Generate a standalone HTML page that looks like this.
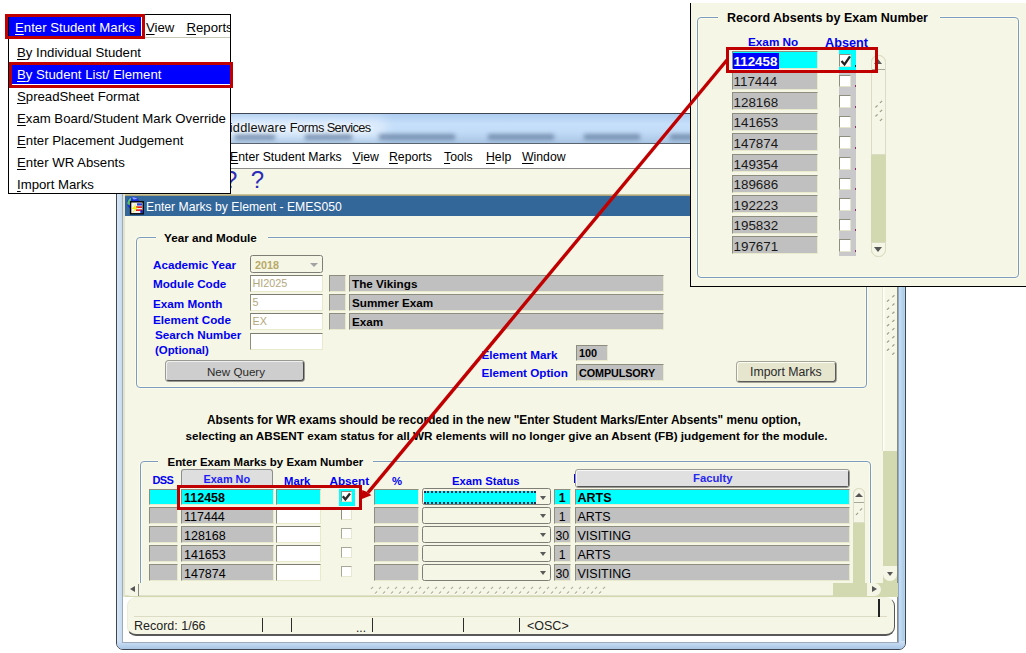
<!DOCTYPE html>
<html><head><meta charset="utf-8"><title>Enter Marks by Element</title>
<style>
*{box-sizing:border-box;margin:0;padding:0}
html,body{width:1026px;height:653px;overflow:hidden;background:#fff}
body{position:relative;font-family:"Liberation Sans",sans-serif;font-size:12px;color:#000}
.a{position:absolute}
.t{position:absolute;white-space:nowrap;line-height:1}
.b{font-weight:bold;font-size:11.7px}
.bl{color:#0000f4}
.fld{position:absolute;background:#c0c0c0;border:1px solid;border-color:#8e8e7e #e9e9cc #e9e9cc #8e8e7e}
.inp{position:absolute;background:#fff;border:1px solid;border-color:#7c7c70 #e9e9cc #e9e9cc #8e8e7e;border-top-width:1.5px}
.cy{background:#00ffff}
.cb{position:absolute;width:11px;height:11px;background:#fff;border:1px solid;border-color:#8e8e7e #e4e4c8 #e4e4c8 #8e8e7e}
.dd{position:absolute;background:#f6f6e6;border:1.4px solid #7e7e76;border-radius:2.5px}
.ar{position:absolute;width:0;height:0;border:3.5px solid transparent}
.gb{position:absolute;border:1.3px solid #7c9bbf;border-radius:4px;box-shadow:0 0 0 1px #fcfcec,inset 0 0 0 1px #fcfcec}
.sep{position:absolute;width:1.4px;height:14px;background:#2c2c2c;top:618px}
.mi{position:absolute;white-space:nowrap;line-height:1;font-size:13.2px;left:17px}
.mb{position:absolute;white-space:nowrap;line-height:1;font-size:12.25px;top:151px}
u{text-decoration:underline;text-underline-offset:1.5px}
</style></head><body>
<!-- main window frame -->
<div class="a" style="left:116px;top:113px;width:790px;height:537px;background:linear-gradient(90deg,#d9e7f6,#c3d9ef 6px,#c3d9ef 780px,#c4ddf2 783px,#a8cbe8 787px,#c4dcf2);border:1px solid #3e4652;border-radius:6px 6px 7px 7px"></div>
<div class="a" style="left:117px;top:641px;width:788px;height:8px;background:linear-gradient(#cfe1f5,#a8c6e6);border-radius:0 0 6px 6px"></div>
<div class="a" style="left:117px;top:114px;width:788px;height:29px;overflow:hidden;background:linear-gradient(#aecdf0,#c6dffa 35%,#c2dcf8 60%,#a9c5e3);border-radius:5px 5px 0 0"><div class="a" style="left:90px;top:4px;width:180px;height:20px;background:#e4f0fd;filter:blur(6px);opacity:.8;border-radius:10px"></div><div class="a" style="left:118px;top:19.5px;width:40px;height:6px;background:#60799c;filter:blur(2.2px);opacity:.7"></div><div class="a" style="left:188px;top:19.5px;width:47px;height:6px;background:#60799c;filter:blur(2.2px);opacity:.7"></div><div class="a" style="left:262px;top:19.5px;width:76px;height:6px;background:#60799c;filter:blur(2.2px);opacity:.7"></div><div class="a" style="left:371px;top:19.5px;width:66px;height:6px;background:#60799c;filter:blur(2.2px);opacity:.7"></div><div class="a" style="left:467px;top:19.5px;width:56px;height:6px;background:#60799c;filter:blur(2.2px);opacity:.7"></div><div class="a" style="left:553px;top:19.5px;width:30px;height:6px;background:#60799c;filter:blur(2.2px);opacity:.7"></div></div>
<div class="t" style="left:219px;top:122.2px;font-size:12.8px;color:#101010;text-shadow:0 0 4px #fff,0 0 6px #fff"><span style="letter-spacing:.18px">Middleware</span><span style="letter-spacing:-.45px;margin-left:.5px"> Forms</span><span style="letter-spacing:-.68px"> Services</span></div>
<div class="a" style="left:123px;top:143px;width:776px;height:1px;background:#5a6470"></div>
<div class="a" style="left:123px;top:144px;width:2px;height:453px;background:#e4e4cc"></div>
<div class="a" style="left:122px;top:144px;width:1px;height:498px;background:#9caabc"></div>
<div class="a" style="left:122px;top:641.5px;width:777px;height:1px;background:#9caabc"></div>
<div class="a" style="left:125px;top:144px;width:773px;height:25px;background:#fff"></div>
<div class="mb" style="left:230px"><u>E</u>nter Student Marks</div>
<div class="mb" style="left:352.5px"><u>V</u>iew</div>
<div class="mb" style="left:389px"><u>R</u>eports</div>
<div class="mb" style="left:444px"><u>T</u>ools</div>
<div class="mb" style="left:486px"><u>H</u>elp</div>
<div class="mb" style="left:522px"><u>W</u>indow</div>
<div class="a" style="left:125px;top:168px;width:773px;height:28px;background:#f6f6e6;border-top:1px solid #8c8c8c"></div>
<div class="t" style="left:224px;top:167.5px;font-size:24px;color:#2c2cb8">?</div>
<div class="t" style="left:250.8px;top:167.5px;font-size:24px;color:#2c2cb8">?</div>
<div class="a" style="left:125px;top:194px;width:773px;height:2px;background:linear-gradient(#d8d4b0,#9c9468)"></div>
<div class="a" style="left:125px;top:196px;width:773px;height:401px;background:#f6f6e6"></div>
<div class="a" style="left:125px;top:196px;width:773px;height:20px;background:#336699"></div>
<div class="t" style="left:146px;top:201px;font-size:12.2px;color:#fff">Enter Marks by Element - EMES050</div>
<svg class="a" style="left:126px;top:196px" width="20" height="20" viewBox="0 0 20 20">
<circle cx="7.2" cy="7" r="6.2" fill="#1c30dc"/><path d="M1.2 8 Q1.5 3 5.5 1.2 Q4.5 4.5 4.2 9.5 Z" fill="#58c070"/><path d="M6 1.5 Q9 .8 11.5 3 L7.5 3.5 Z" fill="#8fa8ff"/>
<rect x="4.6" y="5.8" width="12.6" height="12" fill="#f0f0f0" stroke="#000" stroke-width="1.4"/>
<rect x="11" y="7.3" width="5" height="2.2" fill="#2a3ad8"/><rect x="10" y="10.3" width="6" height="1.7" fill="#e02020"/><rect x="10" y="13.3" width="6" height="1.7" fill="#e02020"/><rect x="14.3" y="14.3" width="2.6" height="2.6" fill="#1020c0"/>
<path d="M10.5 7.2 L5.8 13 L8.6 13 L6.3 17.6 L11.8 11.4 L9 11.4 Z" fill="#f4f000"/>
</svg>
<div class="a" style="left:883px;top:216px;width:14px;height:367px;background:#d2d8b0"></div>
<div class="a" style="left:882px;top:216px;width:15px;height:235px;background:#f6f6e6;border-left:1px solid #e6e6ce;box-shadow:inset 1.5px 0 0 #fffffa"></div>
<div class="a" style="left:897px;top:144px;width:1px;height:498px;background:#848c80"></div>
<div class="a" style="left:898px;top:144px;width:1px;height:498px;background:#90a9c9"></div>
<svg class="a" style="left:0;top:0" width="1026" height="653"><g stroke-width="1.3" fill="none"><path d="M892.3 298.4l2.1 -2.1" stroke="#fffffa"/><path d="M892.3 306.6l2.1 -2.1" stroke="#fffffa"/><path d="M892.3 314.8l2.1 -2.1" stroke="#fffffa"/><path d="M892.3 323.0l2.1 -2.1" stroke="#fffffa"/><path d="M892.3 331.2l2.1 -2.1" stroke="#fffffa"/><path d="M892.3 339.3l2.1 -2.1" stroke="#fffffa"/><path d="M892.3 347.5l2.1 -2.1" stroke="#fffffa"/><path d="M892.3 355.7l2.1 -2.1" stroke="#fffffa"/><path d="M887.0 302.7l2.1 -2.1" stroke="#fffffa"/><path d="M887.0 310.9l2.1 -2.1" stroke="#fffffa"/><path d="M887.0 319.1l2.1 -2.1" stroke="#fffffa"/><path d="M887.0 327.3l2.1 -2.1" stroke="#fffffa"/><path d="M887.0 335.5l2.1 -2.1" stroke="#fffffa"/><path d="M887.0 343.6l2.1 -2.1" stroke="#fffffa"/><path d="M887.0 351.8l2.1 -2.1" stroke="#fffffa"/><path d="M892.3 297.4l2.1 -2.1" stroke="#a2a28a"/><path d="M892.3 305.6l2.1 -2.1" stroke="#a2a28a"/><path d="M892.3 313.8l2.1 -2.1" stroke="#a2a28a"/><path d="M892.3 322.0l2.1 -2.1" stroke="#a2a28a"/><path d="M892.3 330.2l2.1 -2.1" stroke="#a2a28a"/><path d="M892.3 338.3l2.1 -2.1" stroke="#a2a28a"/><path d="M892.3 346.5l2.1 -2.1" stroke="#a2a28a"/><path d="M892.3 354.7l2.1 -2.1" stroke="#a2a28a"/><path d="M887.0 301.7l2.1 -2.1" stroke="#a2a28a"/><path d="M887.0 309.9l2.1 -2.1" stroke="#a2a28a"/><path d="M887.0 318.1l2.1 -2.1" stroke="#a2a28a"/><path d="M887.0 326.3l2.1 -2.1" stroke="#a2a28a"/><path d="M887.0 334.5l2.1 -2.1" stroke="#a2a28a"/><path d="M887.0 342.6l2.1 -2.1" stroke="#a2a28a"/><path d="M887.0 350.8l2.1 -2.1" stroke="#a2a28a"/></g></svg>
<div class="a" style="left:883px;top:566px;width:14px;height:15px;background:#f6f6e6;border-radius:0 0 7px 7px"></div>
<div class="ar" style="left:886.5px;top:572px;border-top:4.5px solid #555"></div>
<div class="gb" style="left:136px;top:237px;width:731px;height:151px"></div>
<div class="a" style="left:156px;top:231px;width:112px;height:13px;background:#f6f6e6"></div>
<div class="t b" style="left:164px;top:232px">Year and Module</div>
<div class="t b bl" style="left:153px;top:259px">Academic Year</div>
<div class="t b bl" style="left:153px;top:278px">Module Code</div>
<div class="t b bl" style="left:153px;top:298px">Exam Month</div>
<div class="t b bl" style="left:153px;top:314px">Element Code</div>
<div class="t b bl" style="left:155px;top:329px">Search Number</div>
<div class="t b bl" style="left:155px;top:345px;font-size:11.4px">(Optional)</div>
<div class="dd" style="left:250px;top:255px;width:73px;height:18px"></div>
<div class="t b" style="left:255px;top:260px;color:#b8aa68;font-size:10.8px">2018</div>
<div class="ar" style="left:310px;top:263px;border-width:4.2px;border-top:4.2px solid #a2a2a6"></div>
<div class="inp" style="left:250px;top:275px;width:73px;height:17px"></div>
<div class="t" style="left:252.5px;top:278px;color:#b4a87c;font-size:10.8px">HI2025</div>
<div class="inp" style="left:250px;top:294px;width:73px;height:17px"></div>
<div class="t" style="left:252.5px;top:297px;color:#b4a87c;font-size:10.8px">5</div>
<div class="inp" style="left:250px;top:312.5px;width:73px;height:17px"></div>
<div class="t" style="left:252.5px;top:315.5px;color:#b4a87c;font-size:10.8px">EX</div>
<div class="inp" style="left:250px;top:332.5px;width:73px;height:17.5px"></div>
<div class="fld" style="left:329px;top:275px;width:17px;height:17px"></div>
<div class="fld" style="left:349px;top:275px;width:315px;height:17px"></div>
<div class="t b" style="left:352px;top:278px">The Vikings</div>
<div class="fld" style="left:329px;top:294px;width:17px;height:17px"></div>
<div class="fld" style="left:349px;top:294px;width:315px;height:17px"></div>
<div class="t b" style="left:352px;top:297px">Summer Exam</div>
<div class="fld" style="left:329px;top:312.5px;width:17px;height:17px"></div>
<div class="fld" style="left:349px;top:312.5px;width:315px;height:17px"></div>
<div class="t b" style="left:352px;top:315.5px">Exam</div>
<div class="t b bl" style="left:481.5px;top:348.5px">Element Mark</div>
<div class="t b bl" style="left:481.5px;top:366.5px">Element Option</div>
<div class="fld" style="left:576px;top:344.5px;width:32px;height:16.5px"></div>
<div class="t b" style="left:579px;top:348px;font-size:10.9px">100</div>
<div class="fld" style="left:576px;top:364px;width:87.5px;height:17px"></div>
<div class="t b" style="left:579px;top:367.5px;font-size:10.8px;letter-spacing:-0.1px">COMPULSORY</div>
<div class="a" style="left:165.5px;top:361px;width:138px;height:20px;background:#cecece;border:1px solid;border-color:#f0f0f0 #4a4a4a #4a4a4a #f0f0f0;box-shadow:0 0 0 1px #9a9a92;border-radius:3px"></div>
<div class="t" style="left:207px;top:366px;font-size:11.6px;color:#2a2a2a">New Query</div>
<div class="a" style="left:737px;top:362px;width:98.5px;height:19.5px;background:#e6e6cf;border:1px solid;border-color:#fcfcf0 #5a5a5a #5a5a5a #fcfcf0;box-shadow:0 0 0 1px #a4a498;border-radius:3px"></div>
<div class="t" style="left:750px;top:365.5px;font-size:12.3px;color:#2a2a2a">Import Marks</div>
<div class="t b" style="left:207px;top:415px;font-size:11.85px">Absents for WR exams should be recorded in the new "Enter Student Marks/Enter Absents" menu option,</div>
<div class="t b" style="left:185.5px;top:429.5px;font-size:11.7px">selecting an ABSENT exam status for all WR elements will no longer give an Absent (FB) judgement for the module.</div>
<div class="gb" style="left:139.5px;top:461px;width:731px;height:140px"></div>
<div class="a" style="left:158px;top:455px;width:215px;height:13px;background:#f6f6e6"></div>
<div class="t b" style="left:167.5px;top:457px;font-size:11.45px">Enter Exam Marks by Exam Number</div>
<div class="t b bl" style="left:152.5px;top:475px;font-size:11px;letter-spacing:-.6px">DSS</div>
<div class="a" style="left:180.8px;top:469.3px;width:92.7px;height:17.7px;background:#dedede;border:1px solid #8e8e8e;border-bottom:none;border-radius:3px 3px 0 0"></div>
<div class="t b bl" style="left:203.5px;top:473.5px;font-size:10.9px;color:#1c1cf8">Exam No</div>
<div class="t b bl" style="left:284px;top:475.5px;font-size:11.3px">Mark</div>
<div class="t b bl" style="left:329.5px;top:475px;font-size:11.7px">Absent</div>
<div class="t b bl" style="left:392px;top:476px;font-size:11.3px">%</div>
<div class="t b bl" style="left:452px;top:476px;font-size:11.25px">Exam Status</div>
<div class="a" style="left:574px;top:474px;width:2px;height:9px;background:#0000f4"></div>
<div class="a" style="left:575.5px;top:469.5px;width:273.5px;height:17px;background:#e0e0e0;border:1px solid;border-color:#f8f8f8 #555 #555 #f8f8f8;border-right-width:1.5px;border-bottom-width:1.5px;outline:1px solid #9a9a92;border-radius:2px"></div>
<div class="t b bl" style="left:693px;top:473px;font-size:11.3px;color:#2828f0">Faculty</div>
<div class="fld cy" style="left:148.5px;top:488.5px;width:29.5px;height:16.5px"></div>
<div class="fld cy" style="left:181px;top:488.5px;width:92.5px;height:16.5px"></div>
<div class="t" style="left:184px;top:492.3px;font-size:12.5px;font-weight:bold;">112458</div>
<div class="fld cy" style="left:275.5px;top:488.5px;width:45.5px;height:16.5px"></div>
<div class="a" style="left:339px;top:488.5px;width:16px;height:17px;background:#00ffff"></div>
<div class="cb" style="left:340.5px;top:490.5px"></div>
<svg class="a" style="left:341px;top:490.5px" width="11" height="11"><path d="M1.8 5.2l2.6 3.2l4.6-6" fill="none" stroke="#2a2a2a" stroke-width="2.4"/></svg>
<div class="fld cy" style="left:373.5px;top:488.5px;width:45.5px;height:16.5px"></div>
<div class="dd" style="left:421.5px;top:488.0px;width:129.5px;height:17px"></div>
<div class="a" style="left:424px;top:490.5px;width:112px;height:13px;background:#00ffff;border-top:2px dotted #1c2c50;border-bottom:2px dotted #1c2c50"></div>
<div class="ar" style="left:539.5px;top:495.5px;border-top:4px solid #5a5a5a"></div>
<div class="fld cy" style="left:553.5px;top:488.5px;width:17.5px;height:16.5px"></div>
<div class="t" style="left:553.5px;width:17.5px;text-align:center;top:492.3px;font-size:12.3px;font-weight:bold;">1</div>
<div class="fld cy" style="left:575px;top:488.5px;width:275px;height:16.5px"></div>
<div class="t" style="left:577.5px;top:492.3px;font-size:12.5px;font-weight:bold;">ARTS</div>
<div class="fld" style="left:148.5px;top:507.4px;width:29.5px;height:16.5px"></div>
<div class="fld" style="left:181px;top:507.4px;width:92.5px;height:16.5px"></div>
<div class="t" style="left:184px;top:511.2px;font-size:12.5px;">117444</div>
<div class="inp" style="left:275.5px;top:507.4px;width:45.5px;height:16.5px"></div>
<div class="cb" style="left:340.5px;top:509.4px"></div>
<div class="fld" style="left:373.5px;top:507.4px;width:45.5px;height:16.5px"></div>
<div class="dd" style="left:421.5px;top:506.9px;width:129.5px;height:17px"></div>
<div class="ar" style="left:539.5px;top:514.4px;border-top:4px solid #5a5a5a"></div>
<div class="fld" style="left:553.5px;top:507.4px;width:17.5px;height:16.5px"></div>
<div class="t" style="left:553.5px;width:17.5px;text-align:center;top:511.2px;font-size:12.3px;">1</div>
<div class="fld" style="left:575px;top:507.4px;width:275px;height:16.5px"></div>
<div class="t" style="left:577.5px;top:511.2px;font-size:12.5px;">ARTS</div>
<div class="fld" style="left:148.5px;top:526.3px;width:29.5px;height:16.5px"></div>
<div class="fld" style="left:181px;top:526.3px;width:92.5px;height:16.5px"></div>
<div class="t" style="left:184px;top:530.0999999999999px;font-size:12.5px;">128168</div>
<div class="inp" style="left:275.5px;top:526.3px;width:45.5px;height:16.5px"></div>
<div class="cb" style="left:340.5px;top:528.3px;border-color:#a8a898 #e8e8d0 #e8e8d0 #a8a898"></div>
<div class="fld" style="left:373.5px;top:526.3px;width:45.5px;height:16.5px"></div>
<div class="dd" style="left:421.5px;top:525.8px;width:129.5px;height:17px"></div>
<div class="ar" style="left:539.5px;top:533.3px;border-top:4px solid #5a5a5a"></div>
<div class="fld" style="left:553.5px;top:526.3px;width:17.5px;height:16.5px"></div>
<div class="t" style="left:553.5px;width:17.5px;text-align:center;top:530.0999999999999px;font-size:12.3px;">30</div>
<div class="fld" style="left:575px;top:526.3px;width:275px;height:16.5px"></div>
<div class="t" style="left:577.5px;top:530.0999999999999px;font-size:12.5px;">VISITING</div>
<div class="fld" style="left:148.5px;top:545.2px;width:29.5px;height:16.5px"></div>
<div class="fld" style="left:181px;top:545.2px;width:92.5px;height:16.5px"></div>
<div class="t" style="left:184px;top:549.0px;font-size:12.5px;">141653</div>
<div class="inp" style="left:275.5px;top:545.2px;width:45.5px;height:16.5px"></div>
<div class="cb" style="left:340.5px;top:547.2px;border-color:#a8a898 #e8e8d0 #e8e8d0 #a8a898"></div>
<div class="fld" style="left:373.5px;top:545.2px;width:45.5px;height:16.5px"></div>
<div class="dd" style="left:421.5px;top:544.7px;width:129.5px;height:17px"></div>
<div class="ar" style="left:539.5px;top:552.2px;border-top:4px solid #5a5a5a"></div>
<div class="fld" style="left:553.5px;top:545.2px;width:17.5px;height:16.5px"></div>
<div class="t" style="left:553.5px;width:17.5px;text-align:center;top:549.0px;font-size:12.3px;">1</div>
<div class="fld" style="left:575px;top:545.2px;width:275px;height:16.5px"></div>
<div class="t" style="left:577.5px;top:549.0px;font-size:12.5px;">ARTS</div>
<div class="fld" style="left:148.5px;top:564.1px;width:29.5px;height:16.5px"></div>
<div class="fld" style="left:181px;top:564.1px;width:92.5px;height:16.5px"></div>
<div class="t" style="left:184px;top:567.9px;font-size:12.5px;">147874</div>
<div class="inp" style="left:275.5px;top:564.1px;width:45.5px;height:16.5px"></div>
<div class="cb" style="left:340.5px;top:566.1px;border-color:#a8a898 #e8e8d0 #e8e8d0 #a8a898"></div>
<div class="fld" style="left:373.5px;top:564.1px;width:45.5px;height:16.5px"></div>
<div class="dd" style="left:421.5px;top:563.6px;width:129.5px;height:17px"></div>
<div class="ar" style="left:539.5px;top:571.1px;border-top:4px solid #5a5a5a"></div>
<div class="fld" style="left:553.5px;top:564.1px;width:17.5px;height:16.5px"></div>
<div class="t" style="left:553.5px;width:17.5px;text-align:center;top:567.9px;font-size:12.3px;">30</div>
<div class="fld" style="left:575px;top:564.1px;width:275px;height:16.5px"></div>
<div class="t" style="left:577.5px;top:567.9px;font-size:12.5px;">VISITING</div>
<div class="a" style="left:852.5px;top:487.5px;width:12.5px;height:96px;background:#d2d8b0;border-radius:6px 6px 0 0"></div>
<div class="a" style="left:853px;top:487.5px;width:12px;height:35px;background:#f6f6e6;border:1px solid #deDEc6;border-radius:6px 6px 0 0"></div>
<div class="a" style="left:854px;top:501.5px;width:10px;height:1px;background:#a8a898"></div>
<div class="ar" style="left:854.7px;top:489.1px;border-width:4.2px;border-bottom:4.7px solid #555"></div>
<svg class="a" style="left:0;top:0" width="1026" height="653"><g stroke-width="1.2" fill="none"><path d="M860.0 511.5l2.1 -2.1" stroke="#fffffa"/><path d="M856.0 516.0l2.1 -2.1" stroke="#fffffa"/><path d="M860.0 510.5l2.1 -2.1" stroke="#a2a28a"/><path d="M856.0 515.0l2.1 -2.1" stroke="#a2a28a"/></g></svg>
<div class="a" style="left:125px;top:583px;width:773px;height:14px;background:#d2d8b0"></div>
<div class="a" style="left:125px;top:583px;width:707.5px;height:12.5px;background:#f6f6e6;border-bottom:1px solid #e0e0c8"></div>
<svg class="a" style="left:0;top:0" width="1026" height="653"><g stroke-width="1.2" fill="none"><path d="M371.0 590.0l2.1 -2.1" stroke="#fffffa"/><path d="M379.0 590.0l2.1 -2.1" stroke="#fffffa"/><path d="M387.0 590.0l2.1 -2.1" stroke="#fffffa"/><path d="M395.0 590.0l2.1 -2.1" stroke="#fffffa"/><path d="M403.0 590.0l2.1 -2.1" stroke="#fffffa"/><path d="M411.0 590.0l2.1 -2.1" stroke="#fffffa"/><path d="M419.0 590.0l2.1 -2.1" stroke="#fffffa"/><path d="M427.0 590.0l2.1 -2.1" stroke="#fffffa"/><path d="M435.0 590.0l2.1 -2.1" stroke="#fffffa"/><path d="M443.0 590.0l2.1 -2.1" stroke="#fffffa"/><path d="M451.0 590.0l2.1 -2.1" stroke="#fffffa"/><path d="M459.0 590.0l2.1 -2.1" stroke="#fffffa"/><path d="M467.0 590.0l2.1 -2.1" stroke="#fffffa"/><path d="M475.0 590.0l2.1 -2.1" stroke="#fffffa"/><path d="M483.0 590.0l2.1 -2.1" stroke="#fffffa"/><path d="M491.0 590.0l2.1 -2.1" stroke="#fffffa"/><path d="M499.0 590.0l2.1 -2.1" stroke="#fffffa"/><path d="M507.0 590.0l2.1 -2.1" stroke="#fffffa"/><path d="M515.0 590.0l2.1 -2.1" stroke="#fffffa"/><path d="M523.0 590.0l2.1 -2.1" stroke="#fffffa"/><path d="M531.0 590.0l2.1 -2.1" stroke="#fffffa"/><path d="M539.0 590.0l2.1 -2.1" stroke="#fffffa"/><path d="M547.0 590.0l2.1 -2.1" stroke="#fffffa"/><path d="M555.0 590.0l2.1 -2.1" stroke="#fffffa"/><path d="M563.0 590.0l2.1 -2.1" stroke="#fffffa"/><path d="M571.0 590.0l2.1 -2.1" stroke="#fffffa"/><path d="M579.0 590.0l2.1 -2.1" stroke="#fffffa"/><path d="M587.0 590.0l2.1 -2.1" stroke="#fffffa"/><path d="M595.0 590.0l2.1 -2.1" stroke="#fffffa"/><path d="M603.0 590.0l2.1 -2.1" stroke="#fffffa"/><path d="M375.0 594.6l2.1 -2.1" stroke="#fffffa"/><path d="M383.0 594.6l2.1 -2.1" stroke="#fffffa"/><path d="M391.0 594.6l2.1 -2.1" stroke="#fffffa"/><path d="M399.0 594.6l2.1 -2.1" stroke="#fffffa"/><path d="M407.0 594.6l2.1 -2.1" stroke="#fffffa"/><path d="M415.0 594.6l2.1 -2.1" stroke="#fffffa"/><path d="M423.0 594.6l2.1 -2.1" stroke="#fffffa"/><path d="M431.0 594.6l2.1 -2.1" stroke="#fffffa"/><path d="M439.0 594.6l2.1 -2.1" stroke="#fffffa"/><path d="M447.0 594.6l2.1 -2.1" stroke="#fffffa"/><path d="M455.0 594.6l2.1 -2.1" stroke="#fffffa"/><path d="M463.0 594.6l2.1 -2.1" stroke="#fffffa"/><path d="M471.0 594.6l2.1 -2.1" stroke="#fffffa"/><path d="M479.0 594.6l2.1 -2.1" stroke="#fffffa"/><path d="M487.0 594.6l2.1 -2.1" stroke="#fffffa"/><path d="M495.0 594.6l2.1 -2.1" stroke="#fffffa"/><path d="M503.0 594.6l2.1 -2.1" stroke="#fffffa"/><path d="M511.0 594.6l2.1 -2.1" stroke="#fffffa"/><path d="M519.0 594.6l2.1 -2.1" stroke="#fffffa"/><path d="M527.0 594.6l2.1 -2.1" stroke="#fffffa"/><path d="M535.0 594.6l2.1 -2.1" stroke="#fffffa"/><path d="M543.0 594.6l2.1 -2.1" stroke="#fffffa"/><path d="M551.0 594.6l2.1 -2.1" stroke="#fffffa"/><path d="M559.0 594.6l2.1 -2.1" stroke="#fffffa"/><path d="M567.0 594.6l2.1 -2.1" stroke="#fffffa"/><path d="M575.0 594.6l2.1 -2.1" stroke="#fffffa"/><path d="M583.0 594.6l2.1 -2.1" stroke="#fffffa"/><path d="M591.0 594.6l2.1 -2.1" stroke="#fffffa"/><path d="M599.0 594.6l2.1 -2.1" stroke="#fffffa"/><path d="M371.0 589.0l2.1 -2.1" stroke="#b4b49c"/><path d="M379.0 589.0l2.1 -2.1" stroke="#b4b49c"/><path d="M387.0 589.0l2.1 -2.1" stroke="#b4b49c"/><path d="M395.0 589.0l2.1 -2.1" stroke="#b4b49c"/><path d="M403.0 589.0l2.1 -2.1" stroke="#b4b49c"/><path d="M411.0 589.0l2.1 -2.1" stroke="#b4b49c"/><path d="M419.0 589.0l2.1 -2.1" stroke="#b4b49c"/><path d="M427.0 589.0l2.1 -2.1" stroke="#b4b49c"/><path d="M435.0 589.0l2.1 -2.1" stroke="#b4b49c"/><path d="M443.0 589.0l2.1 -2.1" stroke="#b4b49c"/><path d="M451.0 589.0l2.1 -2.1" stroke="#b4b49c"/><path d="M459.0 589.0l2.1 -2.1" stroke="#b4b49c"/><path d="M467.0 589.0l2.1 -2.1" stroke="#b4b49c"/><path d="M475.0 589.0l2.1 -2.1" stroke="#b4b49c"/><path d="M483.0 589.0l2.1 -2.1" stroke="#b4b49c"/><path d="M491.0 589.0l2.1 -2.1" stroke="#b4b49c"/><path d="M499.0 589.0l2.1 -2.1" stroke="#b4b49c"/><path d="M507.0 589.0l2.1 -2.1" stroke="#b4b49c"/><path d="M515.0 589.0l2.1 -2.1" stroke="#b4b49c"/><path d="M523.0 589.0l2.1 -2.1" stroke="#b4b49c"/><path d="M531.0 589.0l2.1 -2.1" stroke="#b4b49c"/><path d="M539.0 589.0l2.1 -2.1" stroke="#b4b49c"/><path d="M547.0 589.0l2.1 -2.1" stroke="#b4b49c"/><path d="M555.0 589.0l2.1 -2.1" stroke="#b4b49c"/><path d="M563.0 589.0l2.1 -2.1" stroke="#b4b49c"/><path d="M571.0 589.0l2.1 -2.1" stroke="#b4b49c"/><path d="M579.0 589.0l2.1 -2.1" stroke="#b4b49c"/><path d="M587.0 589.0l2.1 -2.1" stroke="#b4b49c"/><path d="M595.0 589.0l2.1 -2.1" stroke="#b4b49c"/><path d="M603.0 589.0l2.1 -2.1" stroke="#b4b49c"/><path d="M375.0 593.6l2.1 -2.1" stroke="#b4b49c"/><path d="M383.0 593.6l2.1 -2.1" stroke="#b4b49c"/><path d="M391.0 593.6l2.1 -2.1" stroke="#b4b49c"/><path d="M399.0 593.6l2.1 -2.1" stroke="#b4b49c"/><path d="M407.0 593.6l2.1 -2.1" stroke="#b4b49c"/><path d="M415.0 593.6l2.1 -2.1" stroke="#b4b49c"/><path d="M423.0 593.6l2.1 -2.1" stroke="#b4b49c"/><path d="M431.0 593.6l2.1 -2.1" stroke="#b4b49c"/><path d="M439.0 593.6l2.1 -2.1" stroke="#b4b49c"/><path d="M447.0 593.6l2.1 -2.1" stroke="#b4b49c"/><path d="M455.0 593.6l2.1 -2.1" stroke="#b4b49c"/><path d="M463.0 593.6l2.1 -2.1" stroke="#b4b49c"/><path d="M471.0 593.6l2.1 -2.1" stroke="#b4b49c"/><path d="M479.0 593.6l2.1 -2.1" stroke="#b4b49c"/><path d="M487.0 593.6l2.1 -2.1" stroke="#b4b49c"/><path d="M495.0 593.6l2.1 -2.1" stroke="#b4b49c"/><path d="M503.0 593.6l2.1 -2.1" stroke="#b4b49c"/><path d="M511.0 593.6l2.1 -2.1" stroke="#b4b49c"/><path d="M519.0 593.6l2.1 -2.1" stroke="#b4b49c"/><path d="M527.0 593.6l2.1 -2.1" stroke="#b4b49c"/><path d="M535.0 593.6l2.1 -2.1" stroke="#b4b49c"/><path d="M543.0 593.6l2.1 -2.1" stroke="#b4b49c"/><path d="M551.0 593.6l2.1 -2.1" stroke="#b4b49c"/><path d="M559.0 593.6l2.1 -2.1" stroke="#b4b49c"/><path d="M567.0 593.6l2.1 -2.1" stroke="#b4b49c"/><path d="M575.0 593.6l2.1 -2.1" stroke="#b4b49c"/><path d="M583.0 593.6l2.1 -2.1" stroke="#b4b49c"/><path d="M591.0 593.6l2.1 -2.1" stroke="#b4b49c"/><path d="M599.0 593.6l2.1 -2.1" stroke="#b4b49c"/></g></svg>
<div class="a" style="left:867px;top:583px;width:14px;height:13px;background:#f6f6e6;border-radius:0 7px 7px 0"></div>
<div class="ar" style="left:872px;top:586px;border-left:5px solid #555"></div>
<div class="a" style="left:125px;top:583px;width:13px;height:13px;background:#f6f6e6;border-radius:7px 0 0 7px"></div>
<div class="ar" style="left:126.5px;top:586px;border-right:5px solid #555"></div>
<div class="a" style="left:138px;top:584px;width:1px;height:12px;background:#8a8a80"></div>
<div class="a" style="left:123px;top:597px;width:774px;height:44.5px;background:#fff"></div>
<div class="a" style="left:127px;top:597px;width:768px;height:38.5px;background:#f6f6e6;border:1.5px solid;border-color:#f2f2e0 #585858 #585858 #ecECd8;border-bottom-width:2px;border-radius:9px"></div>
<div class="a" style="left:134px;top:616px;width:753px;height:1px;background:#dcdcc4"></div>
<div class="a" style="left:878px;top:599px;width:1.5px;height:18px;background:#222"></div>
<div class="t" style="left:134px;top:620px;font-size:12.5px;color:#222">Record: 1/66</div>
<div class="sep" style="left:262px"></div>
<div class="sep" style="left:291px"></div>
<div class="sep" style="left:372px"></div>
<div class="sep" style="left:463px"></div>
<div class="sep" style="left:519px"></div>
<div class="t" style="left:356px;top:622px;font-size:12px;color:#222">...</div>
<div class="t" style="left:527px;top:620px;font-size:12.5px;color:#222">&lt;OSC&gt;</div>
<div class="a" style="left:690px;top:3px;width:340px;height:284px;background:#f6f6e6;border-left:1px solid #000;border-bottom:1px solid #000"></div>
<div class="gb" style="left:697px;top:16.5px;width:322px;height:261.5px"></div>
<div class="a" style="left:718px;top:10px;width:222px;height:14px;background:#f6f6e6"></div>
<div class="t b" style="left:727px;top:12px;font-size:12.5px">Record Absents by Exam Number</div>
<div class="t b bl" style="left:748px;top:36px;font-size:11.75px">Exam No</div>
<div class="t b bl" style="left:825px;top:37px;font-size:12.7px">Absent</div>
<div class="a" style="left:838.5px;top:50px;width:17.5px;height:205.5px;background:#c9c9cc"></div>
<div class="a" style="left:838.5px;top:50px;width:17.5px;height:20px;background:#00ffff"></div>
<div class="fld cy" style="left:731.5px;top:51.0px;width:86.5px;height:18px"></div>
<div class="a" style="left:732.5px;top:52.5px;width:46.5px;height:16px;background:#0000ff"></div>
<div class="t" style="left:733.5px;top:54.5px;font-size:13.4px;color:#fff;font-weight:bold">112458</div>
<div class="cb" style="left:839.4px;top:54.0px;width:12px;height:12.5px"></div>
<svg class="a" style="left:839.9px;top:54.5px" width="12" height="12"><path d="M1.5 6l3 3.4l5.5-8" fill="none" stroke="#222" stroke-width="2.3"/></svg>
<div class="a" style="left:854.5px;top:64.5px;width:1.5px;height:2px;background:#222"></div>
<div class="fld" style="left:731.5px;top:71.6px;width:86.5px;height:18px"></div>
<div class="t" style="left:733.5px;top:75.1px;font-size:13.4px;color:#181818">117444</div>
<div class="cb" style="left:839.4px;top:74.6px;width:12px;height:12.5px"></div>
<div class="a" style="left:854.5px;top:85.1px;width:1.5px;height:2px;background:#90306a"></div>
<div class="fld" style="left:731.5px;top:92.2px;width:86.5px;height:18px"></div>
<div class="t" style="left:733.5px;top:95.7px;font-size:13.4px;color:#181818">128168</div>
<div class="cb" style="left:839.4px;top:95.2px;width:12px;height:12.5px"></div>
<div class="a" style="left:854.5px;top:105.7px;width:1.5px;height:2px;background:#90306a"></div>
<div class="fld" style="left:731.5px;top:112.8px;width:86.5px;height:18px"></div>
<div class="t" style="left:733.5px;top:116.3px;font-size:13.4px;color:#181818">141653</div>
<div class="cb" style="left:839.4px;top:115.8px;width:12px;height:12.5px"></div>
<div class="a" style="left:854.5px;top:126.3px;width:1.5px;height:2px;background:#90306a"></div>
<div class="fld" style="left:731.5px;top:133.4px;width:86.5px;height:18px"></div>
<div class="t" style="left:733.5px;top:136.9px;font-size:13.4px;color:#181818">147874</div>
<div class="cb" style="left:839.4px;top:136.4px;width:12px;height:12.5px"></div>
<div class="a" style="left:854.5px;top:146.9px;width:1.5px;height:2px;background:#90306a"></div>
<div class="fld" style="left:731.5px;top:154.0px;width:86.5px;height:18px"></div>
<div class="t" style="left:733.5px;top:157.5px;font-size:13.4px;color:#181818">149354</div>
<div class="cb" style="left:839.4px;top:157.0px;width:12px;height:12.5px"></div>
<div class="a" style="left:854.5px;top:167.5px;width:1.5px;height:2px;background:#90306a"></div>
<div class="fld" style="left:731.5px;top:174.6px;width:86.5px;height:18px"></div>
<div class="t" style="left:733.5px;top:178.1px;font-size:13.4px;color:#181818">189686</div>
<div class="cb" style="left:839.4px;top:177.6px;width:12px;height:12.5px"></div>
<div class="a" style="left:854.5px;top:188.1px;width:1.5px;height:2px;background:#90306a"></div>
<div class="fld" style="left:731.5px;top:195.2px;width:86.5px;height:18px"></div>
<div class="t" style="left:733.5px;top:198.7px;font-size:13.4px;color:#181818">192223</div>
<div class="cb" style="left:839.4px;top:198.2px;width:12px;height:12.5px"></div>
<div class="a" style="left:854.5px;top:208.7px;width:1.5px;height:2px;background:#90306a"></div>
<div class="fld" style="left:731.5px;top:215.8px;width:86.5px;height:18px"></div>
<div class="t" style="left:733.5px;top:219.3px;font-size:13.4px;color:#181818">195832</div>
<div class="cb" style="left:839.4px;top:218.8px;width:12px;height:12.5px"></div>
<div class="a" style="left:854.5px;top:229.3px;width:1.5px;height:2px;background:#90306a"></div>
<div class="fld" style="left:731.5px;top:236.4px;width:86.5px;height:18px"></div>
<div class="t" style="left:733.5px;top:239.9px;font-size:13.4px;color:#181818">197671</div>
<div class="cb" style="left:839.4px;top:239.4px;width:12px;height:12.5px"></div>
<div class="a" style="left:854.5px;top:249.9px;width:1.5px;height:2px;background:#90306a"></div>
<div class="a" style="left:871px;top:54.5px;width:15px;height:202.5px;background:#d2d8b0;border-radius:7.5px"></div>
<div class="a" style="left:871px;top:54.5px;width:15px;height:100.5px;background:#f6f6e6;border:1px solid #dcdcc4;border-radius:7.5px 7.5px 0 0"></div>
<div class="a" style="left:872px;top:69px;width:13px;height:1px;background:#a8a898"></div>
<div class="a" style="left:871px;top:242px;width:15px;height:15px;background:#f6f6e6;border:1px solid #dcdcc4;border-radius:0 0 7.5px 7.5px"></div>
<div class="ar" style="left:874.2px;top:247px;border-width:4.5px;border-top:5.3px solid #555"></div>
<div class="ar" style="left:874px;top:54.5px;border-width:4.5px;border-bottom:5px solid #555"></div>
<svg class="a" style="left:0;top:0" width="1026" height="653"><g stroke-width="1.3" fill="none"><path d="M880.0 104.0l2.1 -2.1" stroke="#fffffa"/><path d="M875.5 108.5l2.1 -2.1" stroke="#fffffa"/><path d="M880.0 113.0l2.1 -2.1" stroke="#fffffa"/><path d="M875.5 117.5l2.1 -2.1" stroke="#fffffa"/><path d="M880.0 122.0l2.1 -2.1" stroke="#fffffa"/><path d="M880.0 103.0l2.1 -2.1" stroke="#a2a28a"/><path d="M875.5 107.5l2.1 -2.1" stroke="#a2a28a"/><path d="M880.0 112.0l2.1 -2.1" stroke="#a2a28a"/><path d="M875.5 116.5l2.1 -2.1" stroke="#a2a28a"/><path d="M880.0 121.0l2.1 -2.1" stroke="#a2a28a"/></g></svg>
<div class="a" style="left:8px;top:14px;width:223px;height:180px;background:#fff;border:1px solid #000"></div>
<div class="a" style="left:141px;top:37px;width:89px;height:1px;background:#c8c8b8"></div>
<div class="a" style="left:9px;top:17px;width:132px;height:19px;background:#0000ff"></div>
<div class="t" style="left:15px;top:21px;font-size:13.2px;color:#fff"><u>E</u>nter Student Marks</div>
<div class="a" style="left:146px;top:15px;width:84px;height:22px;overflow:hidden"><div class="t" style="left:0;top:6px;font-size:13.2px"><u>V</u>iew</div><div class="t" style="left:40.5px;top:6px;font-size:13.2px"><u>R</u>eports</div></div>
<div class="a" style="left:11px;top:65px;width:219px;height:19px;background:#0000ff"></div>
<div class="mi" style="top:46px"><u>B</u>y Individual Student</div>
<div class="mi" style="top:68px;color:#fff"><u>B</u>y Student List/ Element</div>
<div class="mi" style="top:90px"><u>S</u>preadSheet Format</div>
<div class="mi" style="top:112px"><u>E</u>xam Board/Student Mark Override</div>
<div class="mi" style="top:134px"><u>E</u>nter Placement Judgement</div>
<div class="mi" style="top:156px"><u>E</u>nter WR Absents</div>
<div class="mi" style="top:178px"><u>I</u>mport Marks</div>
<div class="a" style="left:5px;top:14px;width:140px;height:25px;border:3px solid #c00000"></div>
<div class="a" style="left:8.5px;top:62px;width:224.5px;height:26px;border:3px solid #c00000"></div>
<div class="a" style="left:726px;top:47px;width:151.8px;height:26px;border:3.5px solid #c00000"></div>
<div class="a" style="left:177px;top:485px;width:185px;height:24.6px;border:3.4px solid #c00000"></div>
<svg class="a" style="left:0;top:0" width="1026" height="653"><line x1="727.8" y1="59" x2="368" y2="492.6" stroke="#c00000" stroke-width="3.4"/><polygon points="361.3,499.3 362.3,490 367.2,492 371.3,495.2" fill="#c00000"/></svg>
</body></html>
